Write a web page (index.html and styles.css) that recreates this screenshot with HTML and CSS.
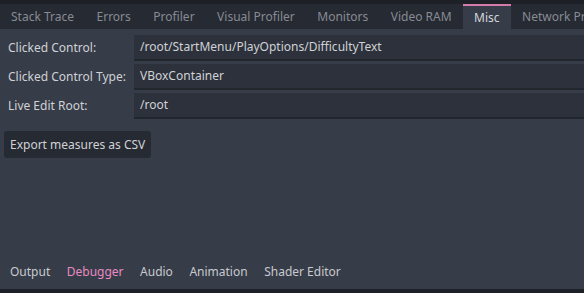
FILE: index.html
```html
<!DOCTYPE html>
<html>
<head>
<meta charset="utf-8">
<link rel="stylesheet" href="styles.css">
</head>
<body>
<div class="app">
  <div class="topstrip"></div>
  <div class="tabbar">
    <div class="tab">Stack Trace</div>
    <div class="tab">Errors</div>
    <div class="tab">Profiler</div>
    <div class="tab">Visual Profiler</div>
    <div class="tab">Monitors</div>
    <div class="tab">Video RAM</div>
    <div class="tab active">Misc</div>
    <div class="tab">Network Profiler</div>
  </div>
  <div class="panel">
    <div class="grid">
      <div class="label">Clicked Control:</div>
      <div class="field">/root/StartMenu/PlayOptions/DifficultyText</div>
      <div class="label">Clicked Control Type:</div>
      <div class="field">VBoxContainer</div>
      <div class="label">Live Edit Root:</div>
      <div class="field">/root</div>
    </div>
    <div class="btnrow"><div class="button">Export measures as CSV</div></div>
    <div class="spacer"></div>
    <div class="bottombar">
      <div class="btab">Output</div>
      <div class="btab active">Debugger</div>
      <div class="btab">Audio</div>
      <div class="btab">Animation</div>
      <div class="btab">Shader Editor</div>
    </div>
  </div>
  <div class="botstrip"></div>
</div>
</body>
</html>
```
FILE: styles.css
```css
html, body {
  margin: 0;
  padding: 0;
  background: #1d2026;
}
body {
  font-family: "Noto Sans", sans-serif;
  font-size: 12px;
  width: 584px;
  height: 293px;
  overflow: hidden;
}
.app {
  display: flex;
  flex-direction: column;
  height: 293px;
}
.topstrip {
  flex: none;
  height: 4px;
  background: #1d2026;
}
.tabbar {
  flex: none;
  display: flex;
  height: 25px;
  background: #262a32;
  white-space: nowrap;
  overflow: hidden;
}
.tab {
  flex: none;
  padding: 0 11.5px 0 11px;
  line-height: 25px;
  color: #868b94;
  box-sizing: border-box;
}
.tab.active {
  background: #363c48;
  color: #d4d6da;
  border-top: 2px solid #d47bab;
  line-height: 23px;
}
.panel {
  flex: 1;
  display: flex;
  flex-direction: column;
  background: #363c48;
}
.grid {
  display: grid;
  grid-template-columns: 126px 1fr;
  row-gap: 3px;
  padding: 6px 0 0 8px;
}
.label {
  color: #d0d2d6;
  line-height: 26px;
  height: 26px;
  white-space: nowrap;
}
.field {
  background: #2c313b;
  border-bottom: 2px solid #22262d;
  color: #d0d2d6;
  line-height: 24px;
  height: 24px;
  padding-left: 6px;
  white-space: nowrap;
}
.btnrow {
  display: flex;
  padding: 12px 0 0 4px;
}
.button {
  background: #262a32;
  color: #d0d2d6;
  border-radius: 3px;
  padding: 0 6px;
  line-height: 27px;
}
.spacer {
  flex: 1;
}
.bottombar {
  display: flex;
  padding: 0 0 7px 1px;
}
.btab {
  color: #c8cace;
  padding: 0 7.5px 0 9px;
  line-height: 20px;
}
.btab.active {
  color: #e88bc3;
}
.botstrip {
  flex: none;
  height: 4px;
  background: #1d2026;
}
```
